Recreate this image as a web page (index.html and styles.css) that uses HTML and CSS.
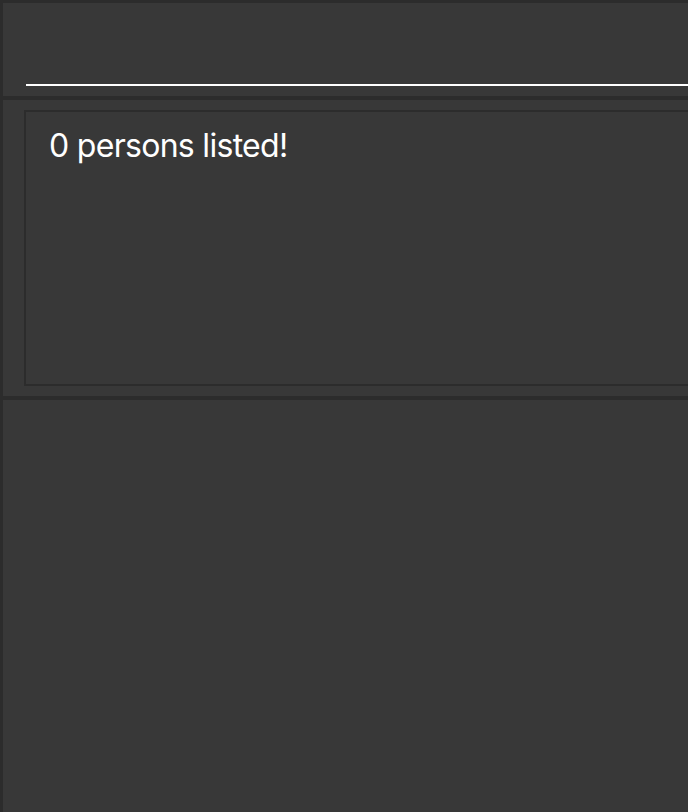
FILE: index.html
```html
<!DOCTYPE html>
<html>
<head>
<meta charset="utf-8">
<link rel="stylesheet" href="styles.css">
</head>
<body>
<div class="window">
  <div class="command">
    <div class="command-field"></div>
  </div>
  <div class="separator"></div>
  <div class="result">
    <div class="result-box">
      <div class="result-text">0 persons listed!</div>
    </div>
  </div>
  <div class="separator"></div>
  <div class="list"></div>
</div>
</body>
</html>
```
FILE: styles.css
```css
html, body {
  margin: 0;
  padding: 0;
  background: #383838;
  overflow: hidden;
  height: 812px;
}
.window {
  width: 100%;
  height: 812px;
  box-sizing: border-box;
  border-left: 3px solid #2c2c2c;
  border-top: 3px solid #2c2c2c;
  display: flex;
  flex-direction: column;
}
.command {
  height: 93px;
  box-sizing: border-box;
  padding-left: 23px;
}
.command-field {
  height: 81px;
  border-bottom: 2px solid #ffffff;
}
.separator {
  height: 4px;
  background: #2c2c2c;
}
.result {
  height: 296px;
  box-sizing: border-box;
  padding: 10px 0 10px 21px;
}
.result-box {
  height: 276px;
  box-sizing: border-box;
  border: 2px solid #2c2c2c;
  border-right: none;
  padding: 14px 0 0 23px;
}
.result-text {
  font-family: Inter, "Noto Sans", sans-serif;
  font-size: 32px;
  line-height: 40px;
  letter-spacing: -0.7px;
  color: #ffffff;
}
.list {
  flex: 1;
}
```
